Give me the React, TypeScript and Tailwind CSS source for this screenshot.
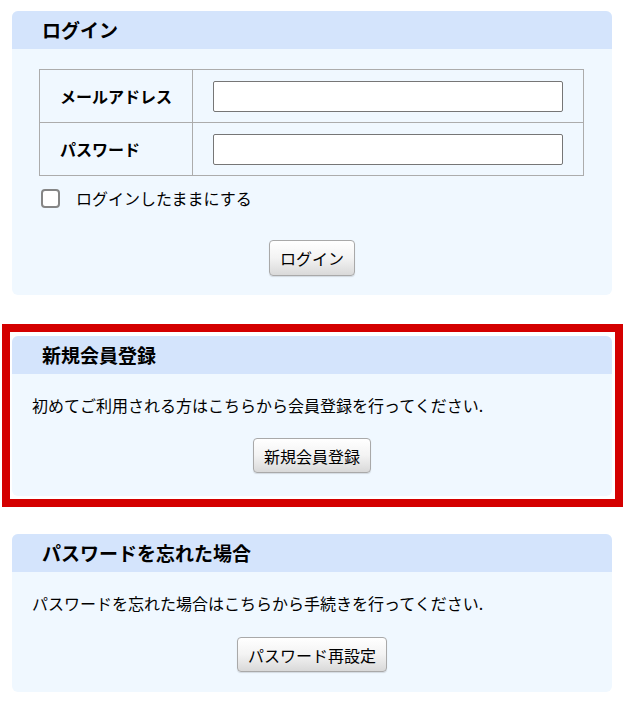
import React from "react";

const font = { fontFamily: '"Noto Sans CJK JP", "Noto Sans", sans-serif' };

function Btn({ children, h = "h-[35px]" }: { children: React.ReactNode; h?: string }) {
  return (
    <button
      className={`${h} px-[10px] rounded-[4px] border border-[#a9a9a9] bg-gradient-to-b from-[#ffffff] via-[#f3f3f3] to-[#d9d9d9] text-[16px] leading-[20px] text-black flex items-center justify-center shadow-[0_1px_1px_rgba(0,0,0,0.12)]`}
    >
      {children}
    </button>
  );
}

function CardHeader({ title }: { title: string }) {
  return (
    <div className="h-[38px] bg-[#d4e4fc] rounded-t-[6px] pl-[30px] flex items-center">
      <span className="text-[19px] font-bold leading-[24px] text-black">{title}</span>
    </div>
  );
}

export default function App() {
  return (
    <div className="w-[626px] bg-white pt-[11px] pb-[19px]" style={font}>
      {/* Login */}
      <div className="ml-[12px] w-[600px] rounded-[6px] bg-[#f0f8ff]">
        <CardHeader title="ログイン" />
        <div className="px-[27px] pt-[20px] pb-[19px]">
          <table className="w-[545px] border-collapse">
            <tbody>
              <tr className="h-[53px]">
                <th className="w-[153px] border border-[#acacac] text-left pl-[20px] text-[16px] font-bold text-black">
                  メールアドレス
                </th>
                <td className="border border-[#acacac] pl-[20px]">
                  <input className="block w-[350px] h-[31px] bg-white border border-[#767676] rounded-[2px] outline-none" />
                </td>
              </tr>
              <tr className="h-[53px]">
                <th className="w-[153px] border border-[#acacac] text-left pl-[20px] text-[16px] font-bold text-black">
                  パスワード
                </th>
                <td className="border border-[#acacac] pl-[20px]">
                  <input type="password" className="block w-[350px] h-[31px] bg-white border border-[#767676] rounded-[2px] outline-none" />
                </td>
              </tr>
            </tbody>
          </table>
          <div className="mt-[10px] flex items-center h-[24px] pl-[2px]">
            <span className="block w-[19px] h-[19px] rounded-[4px] border-2 border-[#858585] bg-white" />
            <span className="ml-[16px] text-[16px] leading-[24px] text-black">ログインしたままにする</span>
          </div>
          <div className="mt-[30px] flex justify-center">
            <Btn h="h-[36px]">ログイン</Btn>
          </div>
        </div>
      </div>

      {/* Register, highlighted */}
      <div className="mt-[29px] ml-[2px] w-[621px] border-[8px] border-[#d40000] pt-[4px] pl-[2px] pr-[3px] pb-[3px]">
        <div className="w-[600px] rounded-[6px] bg-[#f0f8ff]">
          <CardHeader title="新規会員登録" />
          <div className="px-[20px] pt-[19px] pb-[23px]">
            <p className="text-[16px] leading-[24px] text-black">
              初めてご利用される方はこちらから会員登録を行ってください.
            </p>
            <div className="mt-[21px] flex justify-center">
              <Btn>新規会員登録</Btn>
            </div>
          </div>
        </div>
      </div>

      {/* Forgot password */}
      <div className="mt-[27px] ml-[12px] w-[600px] rounded-[6px] bg-[#f0f8ff]">
        <CardHeader title="パスワードを忘れた場合" />
        <div className="px-[20px] pt-[19px] pb-[20px]">
          <p className="text-[16px] leading-[24px] text-black">
            パスワードを忘れた場合はこちらから手続きを行ってください.
          </p>
          <div className="mt-[22px] flex justify-center">
            <Btn>パスワード再設定</Btn>
          </div>
        </div>
      </div>
    </div>
  );
}
